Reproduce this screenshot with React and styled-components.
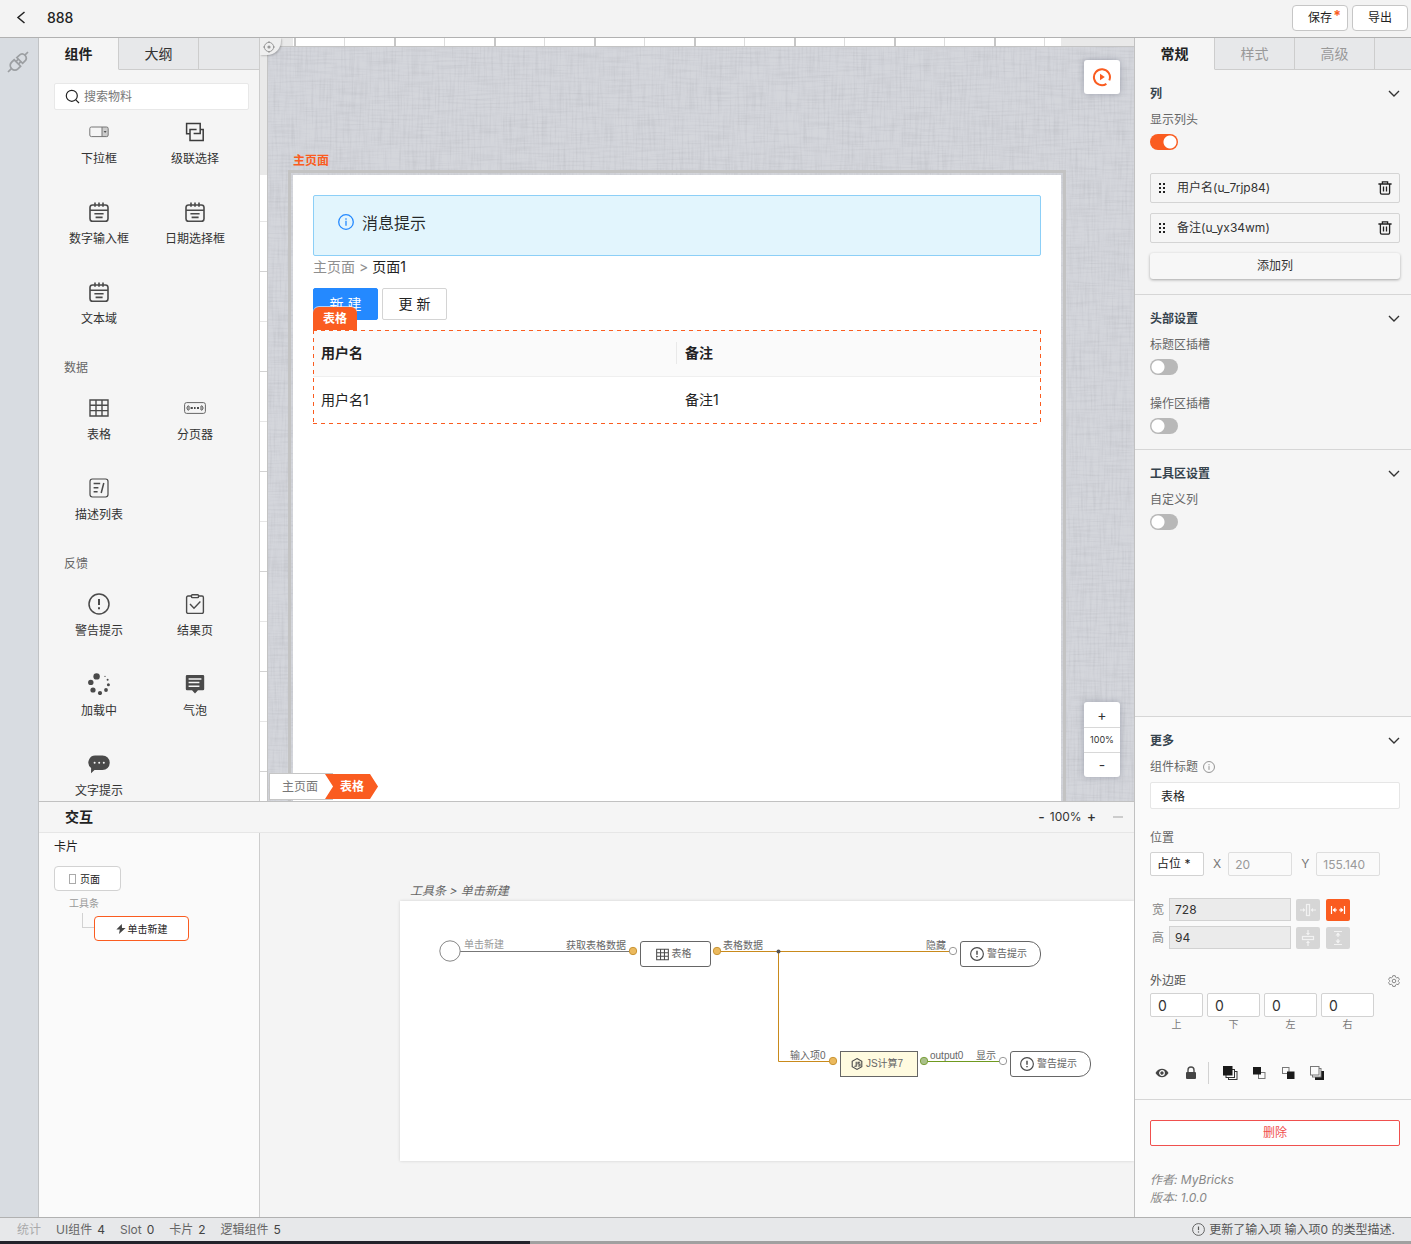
import React from "react";
import styled, { createGlobalStyle, css } from "styled-components";

const ORANGE = "#fa5c20";
const SANS = 'Inter, "Noto Sans CJK SC", sans-serif';
const ARIAL = '"Liberation Sans", "Noto Sans CJK SC", sans-serif';

const GlobalStyle = createGlobalStyle`
  * { box-sizing: border-box; }
  body { margin: 0; background: #f5f5f5; }
  body, button, input, select { font-family: ${SANS}; font-size: 12px; line-height: 16px; color: #333; }
  button { cursor: pointer; padding: 0; }
  a { color: inherit; text-decoration: none; }
  svg { display: block; flex: none; }
`;

/* ---------- shell ---------- */
const Shell = styled.div`
  display: flex;
  flex-direction: column;
  height: 100vh;
  min-width: 1100px;
  overflow: hidden;
`;
const TopBar = styled.header`
  display: flex;
  align-items: center;
  gap: 16px;
  flex: none;
  height: 38px;
  padding: 0 3px 2px 12px;
  background: #f3f3f3;
  border-bottom: 1px solid #b1b1b1;
`;
const Title = styled.h1`
  flex: 1;
  margin: 0;
  font-size: 14px;
  font-weight: 500;
  line-height: 20px;
  color: #222;
`;
const BareButton = styled.button`
  display: inline-flex;
  align-items: center;
  justify-content: center;
  border: 0;
  background: none;
`;
const BarActions = styled.div`
  display: flex;
  gap: 4px;
`;
const BarButton = styled.button`
  position: relative;
  width: 56px;
  height: 26px;
  background: #fff;
  border: 1px solid #c6c6c6;
  border-radius: 4px;
  color: #222;
`;
const Unsaved = styled.span`
  position: absolute;
  top: 2px;
  right: 6px;
  font-size: 14px;
  font-weight: 700;
  color: ${ORANGE};
`;
const Body = styled.div`
  display: flex;
  flex: 1;
  min-height: 0;
`;
const Rail = styled.aside`
  flex: none;
  width: 39px;
  padding: 13px 7px;
  background: #d8dce1;
  border-right: 1px solid #c1c3c5;
`;
const Center = styled.div`
  display: flex;
  flex-direction: column;
  flex: 1;
  min-width: 0;
`;
const Upper = styled.div`
  display: flex;
  flex: 1;
  min-height: 0;
`;

/* ---------- tabs ---------- */
const Tabs = styled.div`
  display: flex;
  flex: none;
  height: 32px;
`;
const Tab = styled.button`
  width: 80px;
  height: 32px;
  border: 0;
  border-right: 1px solid #cdcdcd;
  border-bottom: 1px solid ${(p) => (p.$active ? "#f5f5f5" : "#cdcdcd")};
  background: ${(p) => (p.$active ? "#f5f5f5" : "#e7e8ea")};
  color: ${(p) => (p.$active ? "#222" : p.$muted ? "#999" : "#333")};
  font-size: 14px;
  font-weight: ${(p) => (p.$active ? 600 : 400)};
  line-height: 20px;
`;
const TabFill = styled.div`
  flex: 1;
  background: #e7e8ea;
  border-bottom: 1px solid #cdcdcd;
`;

/* ---------- component library ---------- */
const Library = styled.section`
  display: flex;
  flex-direction: column;
  flex: none;
  width: 221px;
  background: #f5f5f5;
  border-right: 1px solid #cdcdcd;
  overflow: hidden;
`;
const Search = styled.label`
  display: flex;
  align-items: center;
  gap: 4px;
  flex: none;
  height: 27px;
  margin: 13px 10px 10px 15px;
  padding: 0 10px;
  background: #fff;
  border: 1px solid #e8e8e8;
  border-radius: 2px;
`;
const SearchInput = styled.input`
  flex: 1;
  min-width: 0;
  padding: 0;
  border: 0;
  outline: 0;
  background: none;
  &::placeholder { color: #777; opacity: 1; }
`;
const Groups = styled.div`
  flex: 1;
  min-height: 0;
  overflow: hidden;
  padding: 0 16px 0 12px;
`;
const GroupName = styled.h2`
  height: 36px;
  margin: 0;
  padding-left: 13px;
  font-size: 12px;
  font-weight: 400;
  line-height: 16px;
  color: #666;
`;
const Grid = styled.div`
  display: grid;
  grid-template-columns: 1fr 1fr;
  grid-auto-rows: 80px;
`;
const Item = styled.button`
  display: flex;
  flex-direction: column;
  align-items: center;
  gap: 7px;
  border: 0;
  background: none;
`;
const ItemIcon = styled.span`
  display: flex;
  align-items: center;
  height: 24px;
`;

/* ---------- canvas ---------- */
const Stage = styled.section`
  position: relative;
  display: grid;
  grid-template: 9px 1fr / 8px 1fr;
  flex: 1;
  min-width: 0;
`;
const RulerX = styled.div`
  grid-column: 1 / 3;
  padding: 0 73px 0 33px;
  background: #e9e9e9;
  border-bottom: 1px solid #c4c4c4;
`;
const TicksX = styled.div`
  height: 100%;
  background:
    repeating-linear-gradient(90deg, transparent 0 1px, #c6c6c6 1px 3px, transparent 3px 100px),
    repeating-linear-gradient(90deg, transparent 0 51px, #dcdcdc 51px 52px, transparent 52px 100px),
    #fff;
`;
const RulerY = styled.div`
  padding-top: 128px;
  background: #e9e9e9;
  border-right: 1px solid #c4c4c4;
`;
const TicksY = styled.div`
  height: 100%;
  background:
    repeating-linear-gradient(180deg, transparent 0 96px, #d2d2d2 96px 97px, transparent 97px 100px),
    repeating-linear-gradient(180deg, transparent 0 46px, #e6e6e6 46px 47px, transparent 47px 100px),
    #fff;
`;
const Origin = styled.button`
  position: absolute;
  top: 0;
  left: 0;
  display: flex;
  align-items: center;
  justify-content: center;
  width: 21px;
  height: 17px;
  padding-right: 4px;
  border: 0;
  border-radius: 0 0 14px 0;
  background: #efefef;
  box-shadow: 1px 1px 2px rgba(0, 0, 0, 0.2);
`;
const Viewport = styled.div`
  position: relative;
  display: flex;
  flex-direction: column;
  min-width: 0;
  min-height: 0;
  overflow: hidden;
  padding: 106px 68px 0 20px;
  background: #d0d2d8;
`;
const Linen = styled.svg`
  position: absolute;
  inset: 0;
  width: 100%;
  height: 100%;
`;
const PageName = styled.div`
  position: relative;
  padding: 0 5px 1px;
  font-weight: 600;
  color: ${ORANGE};
`;
const Frame = styled.div`
  position: relative;
  display: flex;
  flex: 1;
  min-height: 0;
  padding: 2px 2px 0;
  border: 3px solid #c3c3c3;
  border-bottom: 0;
`;
const Page = styled.div`
  flex: 1;
  min-width: 0;
  padding: 20px;
  background: #fff;
`;
const Notice = styled.div`
  display: flex;
  gap: 8px;
  height: 61px;
  padding: 15px 24px;
  background: #e2f5fd;
  border: 1px solid #8ccff7;
  border-radius: 2px;
  font-size: 16px;
  line-height: 24px;
  color: rgba(0, 0, 0, 0.85);
  svg { margin-top: 3px; }
`;
const Crumbs = styled.nav`
  display: flex;
  gap: 4px;
  margin-bottom: 10px;
  font-size: 14px;
  line-height: 22px;
  color: #8f8f8f;
`;
const CrumbHere = styled.a`
  color: #222;
`;
const ButtonRow = styled.div`
  display: flex;
  gap: 4px;
  margin-bottom: 10px;
`;
const AntButton = styled.button`
  width: 65px;
  height: 32px;
  border: 1px solid ${(p) => (p.$primary ? "#2489ff" : "#d4d4d4")};
  border-radius: 2px;
  background: ${(p) => (p.$primary ? "#2489ff" : "#fff")};
  color: ${(p) => (p.$primary ? "#fff" : "#222")};
  font-size: 14px;
  line-height: 20px;
`;
const Selected = styled.div`
  position: relative;
`;
const SelectionTag = styled.span`
  position: absolute;
  left: 0;
  bottom: 100%;
  width: 44px;
  height: 23px;
  border-radius: 6px 6px 0 0;
  background: ${ORANGE};
  box-shadow: 0 -1px 0 rgba(255, 255, 255, 0.6);
  color: #fff;
  font-weight: 600;
  line-height: 23px;
  text-align: center;
`;
const SelectionOutline = styled.svg`
  position: absolute;
  inset: 0;
  width: 100%;
  height: 100%;
  pointer-events: none;
`;
const DataTable = styled.table`
  width: 100%;
  table-layout: fixed;
  border-collapse: separate;
  border-spacing: 0;
  font-size: 14px;
  line-height: 22px;
  color: #222;
`;
const HeadCell = styled.th`
  height: 47px;
  padding: 0;
  background: #fafafa;
  border-bottom: 1px solid #efefef;
  font-weight: 600;
  text-align: left;
`;
const HeadText = styled.div`
  padding-left: 8px;
  border-right: ${(p) => (p.$last ? 0 : "1px solid #e9e9e9")};
`;
const Cell = styled.td`
  height: 47px;
  padding: 0 8px 2px;
`;
const floating = css`
  position: absolute;
  right: 14px;
  width: 36px;
  background: #fff;
  border-radius: 3px;
  box-shadow: 0 0 6px rgba(90, 95, 115, 0.4);
`;
const Preview = styled.button`
  ${floating}
  top: 22px;
  display: flex;
  align-items: center;
  justify-content: center;
  height: 34px;
  border: 0;
`;
const Zoom = styled.div`
  ${floating}
  bottom: 24px;
  display: flex;
  flex-direction: column;
`;
const ZoomCell = styled.button`
  height: 25px;
  border: 0;
  border-top: ${(p) => (p.$line ? "1px solid #d8d8d8" : 0)};
  background: none;
  font-size: ${(p) => (p.$small ? 9 : 14)}px;
`;
const Path = styled.nav`
  position: absolute;
  left: 9px;
  bottom: 1px;
  display: flex;
  align-items: center;
  line-height: 25px;
`;
const PathItem = styled.a`
  padding: 0 15px 0 12px;
  background: #fff;
  border: 1px solid #c6c6c6;
  border-right: 0;
  color: #777;
`;
const PathActive = styled.a`
  width: 53px;
  margin-left: -8px;
  padding-left: 15px;
  background: ${ORANGE};
  clip-path: polygon(0 0, 45px 0, 100% 50%, 45px 100%, 0 100%, 8px 50%);
  color: #fff;
  font-weight: 600;
`;

/* ---------- interaction panel ---------- */
const Lower = styled.section`
  display: flex;
  flex-direction: column;
  flex: none;
  height: 416px;
  border-top: 1px solid #c1c1c1;
`;
const LowerHead = styled.header`
  display: flex;
  align-items: center;
  gap: 5px;
  flex: none;
  height: 31px;
  padding: 0 11px 0 26px;
  background: #f5f5f5;
  border-bottom: 1px solid #e6e6e6;
`;
const LowerTitle = styled.h2`
  flex: 1;
  margin: 0;
  font-size: 14px;
  font-weight: 600;
  line-height: 20px;
  color: #222;
`;
const ZoomText = styled.span`
  color: #333;
`;
const Sign = styled(BareButton)`
  font-size: 14px;
  font-weight: 500;
`;
const Minimize = styled(BareButton)`
  width: 10px;
  height: 2px;
  margin-left: 12px;
  background: #ccc;
`;
const LowerBody = styled.div`
  display: flex;
  flex: 1;
  min-height: 0;
`;
const Cards = styled.aside`
  display: flex;
  flex-direction: column;
  align-items: flex-start;
  flex: none;
  width: 221px;
  padding: 6px 15px;
  background: #fafafa;
  border-right: 1px solid #cdcdcd;
`;
const CardsTitle = styled.h3`
  margin: 0 0 11px;
  font-size: 12px;
  font-weight: 400;
  line-height: 16px;
  color: #222;
`;
const Card = styled.button`
  display: flex;
  align-items: center;
  justify-content: center;
  gap: ${(p) => (p.$active ? 2 : 4)}px;
  width: ${(p) => (p.$active ? 95 : 67)}px;
  height: 25px;
  padding-right: ${(p) => (p.$active ? 0 : 6)}px;
  background: #fff;
  border: 1px solid ${(p) => (p.$active ? ORANGE : "#d2d2d2")};
  border-radius: 4px;
  font-size: 10px;
  color: #222;
`;
const Branch = styled.div`
  padding: 4px 0 0 15px;
  font-size: 10px;
  color: #999;
`;
const BranchRow = styled.div`
  display: flex;
  margin: 5px 0 0 28px;
`;
const Elbow = styled.span`
  width: 12px;
  height: 15px;
  margin-top: -3px;
  border: solid #d2d2d2;
  border-width: 0 0 1px 1px;
`;
const Flow = styled.div`
  flex: 1;
  min-width: 0;
  padding: 48px 0 0 140px;
  background: #f4f4f4;
  overflow: hidden;
`;
const FlowTitle = styled.div`
  height: 20px;
  padding: 2px 10px;
  font-style: italic;
  color: #666;
`;
const Board = styled.div`
  position: relative;
  height: 260px;
  background: #fff;
  box-shadow: 0 0 3px rgba(0, 0, 0, 0.15);
  font-family: ${ARIAL};
`;
const Wires = styled.svg`
  position: absolute;
  top: 0;
  left: 0;
`;
const Pin = styled.span`
  position: absolute;
  top: ${(p) => p.$y}px;
  left: ${(p) => p.$x}px;
  font-size: 10px;
  line-height: 14px;
  white-space: nowrap;
  color: ${(p) => (p.$muted ? "#999" : "#666")};
`;
const Node = styled.button`
  position: absolute;
  top: ${(p) => p.$y}px;
  left: ${(p) => p.$x}px;
  display: flex;
  align-items: center;
  justify-content: center;
  gap: 3px;
  width: ${(p) => p.$w}px;
  height: 26px;
  padding-right: 4px;
  border: 1px solid #666;
  border-radius: ${(p) => p.$radius};
  background: ${(p) => (p.$code ? "#fffbe0" : "#fff")};
  font-family: ${ARIAL};
  font-size: 10px;
  color: #666;
`;

/* ---------- inspector ---------- */
const Inspector = styled.aside`
  display: flex;
  flex-direction: column;
  flex: none;
  width: 277px;
  background: #f5f5f5;
  border-left: 1px solid #c1c1c1;
`;
const Section = styled.section`
  flex: none;
  padding: 16px 11px 15px 15px;
  border-bottom: ${(p) => (p.$open ? 0 : "1px solid #d6d6d6")};
`;
const Grow = styled.div`
  flex: 1;
`;
const SectionHead = styled.button`
  display: flex;
  align-items: center;
  justify-content: space-between;
  width: 100%;
  height: 16px;
  margin-bottom: 10px;
  border: 0;
  background: none;
  font-weight: 600;
  color: #36434d;
`;
const Field = styled.label`
  display: flex;
  flex-direction: column;
  align-items: flex-start;
  gap: 6px;
  color: #666;
  & + & { margin-top: 21px; }
`;
const Switch = styled.input`
  appearance: none;
  width: 28px;
  height: 16px;
  margin: 0;
  border-radius: 8px;
  background:
    radial-gradient(circle at ${(p) => (p.defaultChecked ? 20 : 8)}px 8px, #fff 6px, transparent 7px),
    ${(p) => (p.defaultChecked ? ORANGE : "#b8b8b8")};
`;
const Columns = styled.div`
  display: flex;
  flex-direction: column;
  gap: 10px;
  margin-top: 23px;
`;
const ColumnRow = styled.div`
  display: flex;
  align-items: center;
  gap: 11px;
  height: 30px;
  padding: 0 7px;
  border: 1px solid #d4d4d4;
  border-radius: 2px;
`;
const ColumnName = styled.span`
  flex: 1;
`;
const AddButton = styled.button`
  height: 26px;
  border: 0;
  border-radius: 3px;
  background: #f7f7f7;
  box-shadow: 0 1px 3px rgba(0, 0, 0, 0.32);
`;
const More = styled.div`
  flex: none;
  background: #fafafa;
  border-top: 1px solid #d6d6d6;
`;
const MoreBody = styled.div`
  padding: 16px 11px 15px 15px;
`;
const Label = styled.label`
  display: flex;
  align-items: center;
  gap: 5px;
  margin: 0;
  color: #666;
`;
const TextBox = styled.input`
  display: block;
  width: 100%;
  height: 27px;
  margin: 7px 0 21px;
  padding: 0 10px;
  background: #fff;
  border: 1px solid #e6e6e6;
  border-radius: 2px;
  color: #222;
`;
const Row = styled.div`
  display: flex;
  align-items: center;
  gap: ${(p) => p.$gap}px;
  margin-top: ${(p) => p.$top}px;
`;
const Mode = styled.select`
  appearance: none;
  width: 54px;
  height: 24px;
  padding: 0 6px;
  background: #fff;
  border: 1px solid #d2d2d2;
  border-radius: 2px;
  color: #222;
`;
const Axis = styled.label`
  display: flex;
  align-items: center;
  gap: 7px;
  color: #777;
`;
const AxisInput = styled.input`
  width: 64px;
  height: 24px;
  padding: 0 6px;
  background: #fafafa;
  border: 1px solid #dedede;
  border-radius: 2px;
  color: #999;
`;
const Size = styled.label`
  display: flex;
  align-items: center;
  gap: 5px;
  padding-left: 2px;
  color: #888;
`;
const SizeInput = styled.input`
  width: 122px;
  height: 23px;
  padding: 0 5px;
  background: #ebebeb;
  border: 1px solid #d2d2d2;
`;
const Fit = styled.button`
  display: flex;
  align-items: center;
  justify-content: center;
  width: 24px;
  height: 22px;
  border: 0;
  border-radius: 2px;
  background: ${(p) => (p.$active ? ORANGE : "#d6d6d6")};
  color: ${(p) => (p.$active ? "#fff" : "#f2f2f2")};
`;
const MarginHead = styled.div`
  display: flex;
  justify-content: space-between;
  align-items: center;
  margin: 24px 0 4px;
  color: #555;
`;
const Margin = styled.label`
  display: flex;
  flex-direction: column;
  align-items: center;
  font-size: 10px;
  line-height: 14px;
  color: #777;
`;
const MarginInput = styled.input`
  width: 53px;
  height: 24px;
  padding: 0 7px;
  background: #fff;
  border: 1px solid #d2d2d2;
  border-radius: 2px;
  font-size: 14px;
`;
const Tools = styled.div`
  display: flex;
  align-items: center;
  gap: 13px;
  height: 22px;
  margin-top: 31px;
  padding-left: 4px;
`;
const Divider = styled.span`
  width: 1px;
  height: 22px;
  margin-left: -4px;
  background: #d2d2d2;
`;
const Footer = styled.div`
  padding: 20px 11px 10px 15px;
  border-top: 1px solid #d6d6d6;
`;
const DeleteButton = styled.button`
  width: 100%;
  height: 26px;
  margin-bottom: 25px;
  background: #fff;
  border: 1px solid #f0504e;
  border-radius: 2px;
  color: #f0504e;
`;
const Meta = styled.div`
  font-style: italic;
  line-height: 18px;
  color: #888;
`;

/* ---------- status ---------- */
const Status = styled.footer`
  display: flex;
  align-items: center;
  gap: 15px;
  flex: none;
  height: 24px;
  padding: 0 16px 0 17px;
  background: #e7e8ea;
  border-top: 1px solid #b1b1b1;
  color: #666;
`;
const Stat = styled.span`
  display: flex;
  gap: 5px;
  color: ${(p) => (p.$muted ? "#aaa" : "#666")};
`;
const Count = styled.b`
  font-weight: 400;
  color: #444;
`;
const StatusMessage = styled.span`
  display: flex;
  align-items: center;
  gap: 4px;
  margin-left: auto;
  color: #555;
`;
const Desk = styled.div`
  flex: none;
  height: 3px;
  background: linear-gradient(90deg, #23232b 530px, #a0a0a0 530px);
`;

/* ---------- icons ---------- */
const Svg = ({ s = 20, w, h, vb, color = "#4a4a4a", sw = 1.4, children }) => (
  <svg width={w || s} height={h || s} viewBox={vb || `0 0 ${w || s} ${h || s}`} fill="none" stroke={color} strokeWidth={sw} aria-hidden="true">
    {children}
  </svg>
);
const CalendarIcon = () => (
  <Svg sw={1.6}>
    <rect x="1" y="3" width="18" height="16.4" rx="2.6" />
    <path d="M1 8.2h18M6 .4v4.4M14 .4v4.4M10 .4v4.4M5.4 11.8h9.2M6.6 15.4h7" />
  </Svg>
);
const TableIcon = ({ s = 20 }) => (
  <Svg s={s} vb="0 0 20 20" sw={s < 15 ? 1.6 : 1.4}>
    <path d="M1 2h18v16H1zM1 7.3h18M1 12.6h18M7 2v16M13 2v16" />
  </Svg>
);
const WarnIcon = ({ s = 22, color, sw = 1.5 }) => (
  <Svg s={s} vb="0 0 22 22" sw={sw} color={color}>
    <circle cx="11" cy="11" r="10" />
    <path d="M11 6v6" strokeWidth={sw + 0.5} />
    <path d="M11 14.2v2" strokeWidth={sw + 0.5} />
  </Svg>
);
const InfoIcon = ({ s, color, sw = 1.3 }) => (
  <Svg s={s} vb="0 0 16 16" sw={sw} color={color}>
    <circle cx="8" cy="8" r="7.3" />
    <path d="M8 6.8v5M8 4.2v1.5" />
  </Svg>
);
const SelectIcon = () => (
  <Svg w={20} h={12} sw={1}>
    <rect x="13" y="1" width="6" height="10" fill="#ccc" stroke="none" />
    <rect x=".8" y="1" width="18.4" height="9.6" rx="1.6" stroke="#777" />
    <path d="M13 1v9.6" stroke="#777" />
    <path d="M14.6 5h3l-1.5 2z" fill="#555" stroke="none" />
  </Svg>
);
const CascadeIcon = () => (
  <Svg color="#3c3c3c" sw={1.5}>
    <path d="M5 11.8H1.6V1.6h13.6v10H8.6" />
    <path d="M11.6 7.6H5v10.8h13.2V7.6h-3" />
  </Svg>
);
const PagerIcon = () => (
  <Svg w={22} h={12} sw={1}>
    <rect x=".6" y=".6" width="20.8" height="10.8" rx="2" stroke="#666" />
    <path d="M4.4 3.4 2.8 6l1.6 2.6M17.6 3.4 19.2 6l-1.6 2.6M17 4v4M5 4v4" />
    <path d="M6.6 6h2.2M10 6h1.6M13 6h2" strokeWidth="2" />
  </Svg>
);
const ListIcon = () => (
  <Svg sw={1.2}>
    <rect x="1" y="1" width="18" height="18" rx="2.4" />
    <path d="M4.6 5.6h6.6M4.6 9.8h4.8M4.6 13.8h4M14.8 5l-2.6 10" strokeWidth="1.5" />
  </Svg>
);
const ResultIcon = () => (
  <Svg sw={1.4}>
    <path d="M6.5 2H3a1.4 1.4 0 0 0-1.4 1.4V18A1.4 1.4 0 0 0 3 19.4h14a1.4 1.4 0 0 0 1.4-1.4V3.4A1.4 1.4 0 0 0 17 2h-3.5" />
    <rect x="6.5" y=".8" width="7" height="2.8" rx=".8" />
    <path d="m5 10 4 4.2 6.4-6.6" />
  </Svg>
);
const LoadingIcon = () => (
  <svg width="22" height="22" viewBox="0 0 22 22" fill="#4a4a4a" aria-hidden="true">
    <circle cx="8.6" cy="3.4" r="3.2" />
    <circle cx="2.8" cy="9.4" r="2.7" />
    <circle cx="5" cy="17" r="2.6" />
    <circle cx="12" cy="20" r="2.1" />
    <circle cx="18" cy="17" r="1.9" />
    <circle cx="20.4" cy="11.8" r="1.5" />
    <circle cx="19.6" cy="6.8" r="1" />
    <circle cx="17" cy="3.4" r=".6" />
  </svg>
);
const BubbleIcon = () => (
  <svg width="20" height="20" viewBox="0 0 20 20" fill="#4a4a4a" aria-hidden="true">
    <path d="M2 1h16a1.2 1.2 0 0 1 1.2 1.2V15A1.2 1.2 0 0 1 18 16.2h-5L10 19.4 7 16.2H2A1.2 1.2 0 0 1 .8 15V2.2A1.2 1.2 0 0 1 2 1z" />
    <path d="M3.6 5h12.8M3.6 8.6h10.8M3.6 12.2h10.8" stroke="#f5f5f5" strokeWidth="1.5" />
  </svg>
);
const ChatIcon = () => (
  <svg width="22" height="20" viewBox="0 0 22 20" fill="#4a4a4a" aria-hidden="true">
    <path d="M8 1.5h6.500a6.700 6.700 0 0 1 0 14.500H6.500L3 19.200l.100-5.200A7 7 0 0 1 8 1.500z" />
    <circle cx="6.600" cy="8.800" r="1" fill="#f5f5f5" />
    <circle cx="11.200" cy="8.800" r="1" fill="#f5f5f5" />
    <circle cx="15.800" cy="8.800" r="1" fill="#f5f5f5" />
  </svg>
);
const PlugIcon = () => (
  <Svg s={22} sw={1.7} color="#9c9fa2">
    <path d="m1 21 3.400-3.400M21 1l-3.400 3.400" />
    <path d="M4.600 17.600c-2-2.200-1.800-4.800.200-6.600l2.400-2.200 6.400 6.400-2.400 2.400c-2 1.900-4.600 1.900-6.600 0z" />
    <path d="m9.800 6.600 2.400-2.200c1.800-1.800 4.200-1.600 5.800-.200 1.600 1.800 1.600 4.200-.200 6l-2.200 2.200z" />
    <path d="m9 10.600 2.400-2.600M11.600 13l2.400-2.600" />
  </Svg>
);
const ChevronIcon = () => (
  <Svg w={12} h={8} color="#333" sw={1.4}><path d="m1 1 5 5 5-5" /></Svg>
);
const DragIcon = () => (
  <svg width="8" height="10" viewBox="0 0 8 10" fill="#222" aria-hidden="true">
    {[0, 4, 8].map((y) => [1, 5].map((x) => <rect key={`${x}-${y}`} x={x} y={y} width="2" height="2" />))}
  </svg>
);
const TrashIcon = () => (
  <Svg s={14} color="#222" sw={1.3}>
    <path d="M.4 3h13.2M4.4 2.8V.8h5.2v2M2.4 3.2v8.600a1.400 1.400 0 0 0 1.400 1.400h6.400a1.400 1.400 0 0 0 1.400-1.400V3.200M5.500 5.600v5M8.500 5.600v5" />
  </Svg>
);
const GearIcon = () => (
  <Svg s={12} sw={1} color="#888">
    <path d="M4.800.700h2.400l.400 1.500 1.100.700 1.500-.500 1.200 2.100L10.300 5.500v1l1.100 1.100-1.200 2.100-1.500-.500-1.100.700-.400 1.500H4.800l-.400-1.500-1.100-.700-1.500.500L.600 7.600 1.700 6.500v-1L.600 4.500l1.200-2.100 1.500.500 1.100-.700z" />
    <circle cx="6" cy="6" r="1.800" />
  </Svg>
);
const LayerIcon = ({ kind }) => (
  <Svg s={16} sw={1} color="#777">
    {kind === "top" && (<><rect x="6.5" y="6.5" width="8.500" height="8" fill="#fafafa" stroke="#333" /><rect x="4" y="4.500" width="8.500" height="8" fill="#fafafa" stroke="#333" /><rect x="1" y="1" width="9.500" height="9.500" fill="#1a1a1a" stroke="none" /></>)}
    {kind === "up" && (<><rect x="7.500" y="7.500" width="6.500" height="6" /><rect x="2" y="2" width="8" height="7.500" fill="#1a1a1a" stroke="none" /></>)}
    {kind === "down" && (<><rect x="2.500" y="2.500" width="6.500" height="6" /><rect x="7" y="6.500" width="7.500" height="7.500" fill="#1a1a1a" stroke="none" /></>)}
    {kind === "bottom" && (<><rect x="6" y="6" width="9" height="9" fill="#1a1a1a" stroke="none" /><rect x="3.500" y="3.500" width="8.500" height="8.500" fill="#fafafa" /><rect x="1.500" y="1.500" width="8.500" height="8.500" fill="#fafafa" /></>)}
  </Svg>
);
const FitIcon = ({ kind }) => (
  <Svg s={16} sw={1.2} color="currentColor">
    <g transform={kind.startsWith("v") ? "rotate(90 8 8)" : undefined}>
      {kind.endsWith("fill") ? (
        <>
          <path d="M1.500 4v8M14.500 4v8M3 8h4M9 8h4" />
          <path d="M2.500 8 5.500 5.500v5zM13.500 8l-3-2.500v5z" fill="currentColor" stroke="none" />
        </>
      ) : (
        <>
          <rect x="6.500" y="2.500" width="3" height="11" />
          <path d="M0 8h4M12 8h4" />
          <path d="M5.500 8 3 6v4zM10.500 8 13 6v4z" fill="currentColor" stroke="none" />
        </>
      )}
    </g>
  </Svg>
);
const LinenTexture = () => (
  <Linen aria-hidden="true">
    <filter id="weft" x="0" y="0" width="100%" height="100%" colorInterpolationFilters="sRGB">
      <feTurbulence type="fractalNoise" baseFrequency="0.03 0.5" numOctaves="2" seed="4" />
      <feColorMatrix values="2 0 0 0 -0.15 2 0 0 0 -0.15 2 0 0 0 -0.13 0 0 0 0 0.04" />
    </filter>
    <filter id="warp" x="0" y="0" width="100%" height="100%" colorInterpolationFilters="sRGB">
      <feTurbulence type="fractalNoise" baseFrequency="0.5 0.03" numOctaves="2" seed="9" />
      <feColorMatrix values="2 0 0 0 -0.15 2 0 0 0 -0.15 2 0 0 0 -0.13 0 0 0 0 0.04" />
    </filter>
    <rect width="100%" height="100%" filter="url(#weft)" />
    <rect width="100%" height="100%" filter="url(#warp)" />
  </Linen>
);

const GROUPS = [
  { items: [["下拉框", SelectIcon], ["级联选择", CascadeIcon], ["数字输入框", CalendarIcon], ["日期选择框", CalendarIcon], ["文本域", CalendarIcon]] },
  { name: "数据", items: [["表格", TableIcon], ["分页器", PagerIcon], ["描述列表", ListIcon]] },
  { name: "反馈", items: [["警告提示", WarnIcon], ["结果页", ResultIcon], ["加载中", LoadingIcon], ["气泡", BubbleIcon], ["文字提示", ChatIcon]] },
];

function LibraryPanel() {
  return (
    <Library>
      <Tabs role="tablist">
        <Tab role="tab" aria-selected="true" $active>组件</Tab>
        <Tab role="tab" aria-selected="false">大纲</Tab>
        <TabFill />
      </Tabs>
      <Search>
        <Svg s={15} color="#222" sw={1.2}>
          <circle cx="6.800" cy="6.800" r="5.500" />
          <path d="m10.800 10.800 3.200 3.200" />
        </Svg>
        <SearchInput type="search" aria-label="搜索物料" placeholder="搜索物料" />
      </Search>
      <Groups>
        {GROUPS.map((g, i) => (
          <div key={i}>
            {g.name && <GroupName>{g.name}</GroupName>}
            <Grid>
              {g.items.map(([label, Icon]) => (
                <Item key={label}>
                  <ItemIcon><Icon /></ItemIcon>
                  {label}
                </Item>
              ))}
            </Grid>
          </div>
        ))}
      </Groups>
    </Library>
  );
}

function StagePanel() {
  return (
    <Stage>
      <RulerX><TicksX /></RulerX>
      <RulerY><TicksY /></RulerY>
      <Viewport>
        <LinenTexture />
        <PageName>主页面</PageName>
        <Frame>
          <Page>
            <Notice role="alert">
              <InfoIcon s={16} color="#2489ff" />
              消息提示
            </Notice>
            <Crumbs>
              <a href="#main">主页面</a>
              <span>&gt;</span>
              <CrumbHere href="#page1">页面1</CrumbHere>
            </Crumbs>
            <ButtonRow>
              <AntButton $primary>新 建</AntButton>
              <AntButton>更 新</AntButton>
            </ButtonRow>
            <Selected>
              <DataTable>
                <thead>
                  <tr>
                    <HeadCell scope="col"><HeadText>用户名</HeadText></HeadCell>
                    <HeadCell scope="col"><HeadText $last>备注</HeadText></HeadCell>
                  </tr>
                </thead>
                <tbody>
                  <tr>
                    <Cell>用户名1</Cell>
                    <Cell>备注1</Cell>
                  </tr>
                </tbody>
              </DataTable>
              <SelectionOutline aria-hidden="true">
                <g stroke={ORANGE} strokeWidth="2" strokeDasharray="4 4">
                  <line x1="0" y1="0" x2="100%" y2="0" />
                  <line x1="0" y1="100%" x2="100%" y2="100%" />
                  <line x1="0" y1="0" x2="0" y2="100%" />
                  <line x1="100%" y1="0" x2="100%" y2="100%" />
                </g>
              </SelectionOutline>
              <SelectionTag>表格</SelectionTag>
            </Selected>
          </Page>
        </Frame>
      </Viewport>
      <Origin aria-label="定位">
        <Svg s={12} sw={1} color="#999">
          <circle cx="6" cy="6" r="4.600" />
          <circle cx="6" cy="6" r="1.600" fill="#999" stroke="none" />
          <path d="M6 0v2M6 10v2M0 6h2M10 6h2" />
        </Svg>
      </Origin>
      <Preview aria-label="预览">
        <Svg s={20} sw={2} color={ORANGE}>
          <path d="M14.400 16.800A8 8 0 1 1 17.300 13.300" />
          <path d="M8 6.800v6.400L12.800 10z" fill={ORANGE} stroke="none" />
        </Svg>
      </Preview>
      <Zoom>
        <ZoomCell>+</ZoomCell>
        <ZoomCell $line $small>100%</ZoomCell>
        <ZoomCell $line>-</ZoomCell>
      </Zoom>
      <Path>
        <PathItem href="#main">主页面</PathItem>
        <PathActive href="#table">表格</PathActive>
      </Path>
    </Stage>
  );
}

function InteractionPanel() {
  return (
    <Lower>
      <LowerHead>
        <LowerTitle>交互</LowerTitle>
        <Sign aria-label="缩小">-</Sign>
        <ZoomText>100%</ZoomText>
        <Sign aria-label="放大">+</Sign>
        <Minimize aria-label="收起" />
      </LowerHead>
      <LowerBody>
        <Cards>
          <CardsTitle>卡片</CardsTitle>
          <Card>
            <Svg w={7} h={10} sw={1} color="#555"><rect x=".5" y=".5" width="6" height="9" strokeDasharray="1 1" /></Svg>
            页面
          </Card>
          <Branch>工具条</Branch>
          <BranchRow>
            <Elbow />
            <Card $active>
              <svg width="10" height="10" viewBox="0 0 10 10" fill="#444" aria-hidden="true"><path d="M5.800 0 .400 5.600h3.400L3 10l6.600-6H6z" /></svg>
              单击新建
            </Card>
          </BranchRow>
        </Cards>
        <Flow>
          <FlowTitle>工具条 &gt; 单击新建</FlowTitle>
          <Board>
            <Wires width="700" height="200" fill="none" aria-hidden="true">
              <path d="M60 50.500h170" stroke="#777" />
              <path d="M321 50.500h228M378.500 50.500v110H430" stroke="#c98a1b" />
              <path d="M528 160.500h72" stroke="#6f9a1f" />
              <circle cx="50" cy="50" r="10.200" fill="#fff" stroke="#888" />
              <circle cx="378.500" cy="50.500" r="2" fill="#555" />
              {[[233, 50], [317, 50], [433, 160]].map(([x, y]) => (
                <circle key={`${x}-${y}`} cx={x} cy={y} r="3.700" fill="#ebb95d" stroke="#c99536" />
              ))}
              <circle cx="524" cy="160" r="3.700" fill="#a9c08a" stroke="#7ca03c" />
              <circle cx="553" cy="50" r="3.700" fill="#fff" stroke="#999" />
              <circle cx="603" cy="160" r="3.700" fill="#fff" stroke="#999" />
            </Wires>
            <Pin $x={64} $y={37} $muted>单击新建</Pin>
            <Pin $x={166} $y={38}>获取表格数据</Pin>
            <Pin $x={323} $y={38}>表格数据</Pin>
            <Pin $x={526} $y={38}>隐藏</Pin>
            <Pin $x={390} $y={148}>输入项0</Pin>
            <Pin $x={530} $y={148}>output0</Pin>
            <Pin $x={576} $y={148}>显示</Pin>
            <Node $x={240} $y={40} $w={71} $radius="3px"><TableIcon s={13} />表格</Node>
            <Node $x={560} $y={40} $w={81} $radius="3px 12px 12px 3px"><WarnIcon s={14} sw={1.8} />警告提示</Node>
            <Node $x={440} $y={150} $w={78} $radius="0" $code>
              <Svg s={12} sw={1.1}>
                <path d="M6 .6 10.800 3.300v5.400L6 11.400 1.200 8.700V3.300z" />
                <path d="M5.200 3.800v4.400H3.400M9.200 4.200H7v1.800h2v2H6.800" />
              </Svg>
              JS计算7
            </Node>
            <Node $x={610} $y={150} $w={81} $radius="3px 12px 12px 3px"><WarnIcon s={14} sw={1.8} />警告提示</Node>
          </Board>
        </Flow>
      </LowerBody>
    </Lower>
  );
}

function SectionTitle({ children }) {
  return <SectionHead aria-expanded="true">{children}<ChevronIcon /></SectionHead>;
}

function InspectorPanel() {
  return (
    <Inspector>
      <Tabs role="tablist">
        <Tab role="tab" aria-selected="true" $active>常规</Tab>
        <Tab role="tab" aria-selected="false" $muted>样式</Tab>
        <Tab role="tab" aria-selected="false" $muted>高级</Tab>
        <TabFill />
      </Tabs>
      <Section>
        <SectionTitle>列</SectionTitle>
        <Field>显示列头<Switch type="checkbox" role="switch" defaultChecked /></Field>
        <Columns>
          {["用户名(u_7rjp84)", "备注(u_yx34wm)"].map((name) => (
            <ColumnRow key={name}>
              <DragIcon />
              <ColumnName>{name}</ColumnName>
              <BareButton aria-label="删除列"><TrashIcon /></BareButton>
            </ColumnRow>
          ))}
          <AddButton>添加列</AddButton>
        </Columns>
      </Section>
      <Section>
        <SectionTitle>头部设置</SectionTitle>
        <Field>标题区插槽<Switch type="checkbox" role="switch" /></Field>
        <Field>操作区插槽<Switch type="checkbox" role="switch" /></Field>
      </Section>
      <Section $open>
        <SectionTitle>工具区设置</SectionTitle>
        <Field>自定义列<Switch type="checkbox" role="switch" /></Field>
      </Section>
      <Grow />
      <More>
        <MoreBody>
          <SectionTitle>更多</SectionTitle>
          <Label htmlFor="component-title">组件标题 <InfoIcon s={12} color="#888" sw={1.2} /></Label>
          <TextBox id="component-title" defaultValue="表格" />
          <Label htmlFor="position-mode">位置</Label>
          <Row $gap={9} $top={6}>
            <Mode id="position-mode" defaultValue="占位 *"><option>占位 *</option></Mode>
            <Axis>X<AxisInput defaultValue="20" disabled /></Axis>
            <Axis>Y<AxisInput defaultValue="155.140" disabled /></Axis>
          </Row>
          <Row $gap={5} $top={22}>
            <Size>宽<SizeInput defaultValue="728" /></Size>
            <Row $gap={6} $top={0}>
              <Fit aria-label="宽度适应内容"><FitIcon kind="h-hug" /></Fit>
              <Fit aria-label="宽度填充" $active><FitIcon kind="h-fill" /></Fit>
            </Row>
          </Row>
          <Row $gap={5} $top={5}>
            <Size>高<SizeInput defaultValue="94" /></Size>
            <Row $gap={6} $top={0}>
              <Fit aria-label="高度适应内容"><FitIcon kind="v-hug" /></Fit>
              <Fit aria-label="高度填充"><FitIcon kind="v-fill" /></Fit>
            </Row>
          </Row>
          <MarginHead>外边距<BareButton aria-label="外边距设置"><GearIcon /></BareButton></MarginHead>
          <Row $gap={4} $top={0}>
            {["上", "下", "左", "右"].map((side) => (
              <Margin key={side}><MarginInput defaultValue="0" />{side}</Margin>
            ))}
          </Row>
          <Tools>
            <BareButton aria-label="显示">
              <Svg s={16} sw={0}>
                <path d="M1.500 8c3.200-5.600 9.800-5.600 13 0-3.200 5.600-9.800 5.600-13 0z" fill="#444" />
                <circle cx="8" cy="8" r="2.300" fill="none" stroke="#fff" strokeWidth="1.200" />
              </Svg>
            </BareButton>
            <BareButton aria-label="锁定">
              <Svg s={16}>
                <rect x="3" y="7" width="10" height="7" rx="1" fill="#444" stroke="none" />
                <path d="M5 7V5a3 3 0 0 1 6 0v2" />
              </Svg>
            </BareButton>
            <Divider />
            <BareButton aria-label="置顶"><LayerIcon kind="top" /></BareButton>
            <BareButton aria-label="上移"><LayerIcon kind="up" /></BareButton>
            <BareButton aria-label="下移"><LayerIcon kind="down" /></BareButton>
            <BareButton aria-label="置底"><LayerIcon kind="bottom" /></BareButton>
          </Tools>
        </MoreBody>
        <Footer>
          <DeleteButton>删除</DeleteButton>
          <Meta>作者: MyBricks</Meta>
          <Meta>版本: 1.0.0</Meta>
        </Footer>
      </More>
    </Inspector>
  );
}

export default function App() {
  return (
    <Shell>
      <GlobalStyle />
      <TopBar>
        <BareButton aria-label="返回">
          <Svg s={19} color="#222" sw={1.5}><path d="m12.500 4-6.500 5.500 6.500 5.500" /></Svg>
        </BareButton>
        <Title>888</Title>
        <BarActions>
          <BarButton>保存<Unsaved>*</Unsaved></BarButton>
          <BarButton>导出</BarButton>
        </BarActions>
      </TopBar>
      <Body>
        <Rail><BareButton aria-label="连接器"><PlugIcon /></BareButton></Rail>
        <Center>
          <Upper>
            <LibraryPanel />
            <StagePanel />
          </Upper>
          <InteractionPanel />
        </Center>
        <InspectorPanel />
      </Body>
      <Status>
        <Stat $muted>统计</Stat>
        <Stat>UI组件 <Count>4</Count></Stat>
        <Stat>Slot <Count>0</Count></Stat>
        <Stat>卡片 <Count>2</Count></Stat>
        <Stat>逻辑组件 <Count>5</Count></Stat>
        <StatusMessage>
          <WarnIcon s={13} color="#555" />
          更新了输入项 输入项0 的类型描述.
        </StatusMessage>
      </Status>
      <Desk />
    </Shell>
  );
}
